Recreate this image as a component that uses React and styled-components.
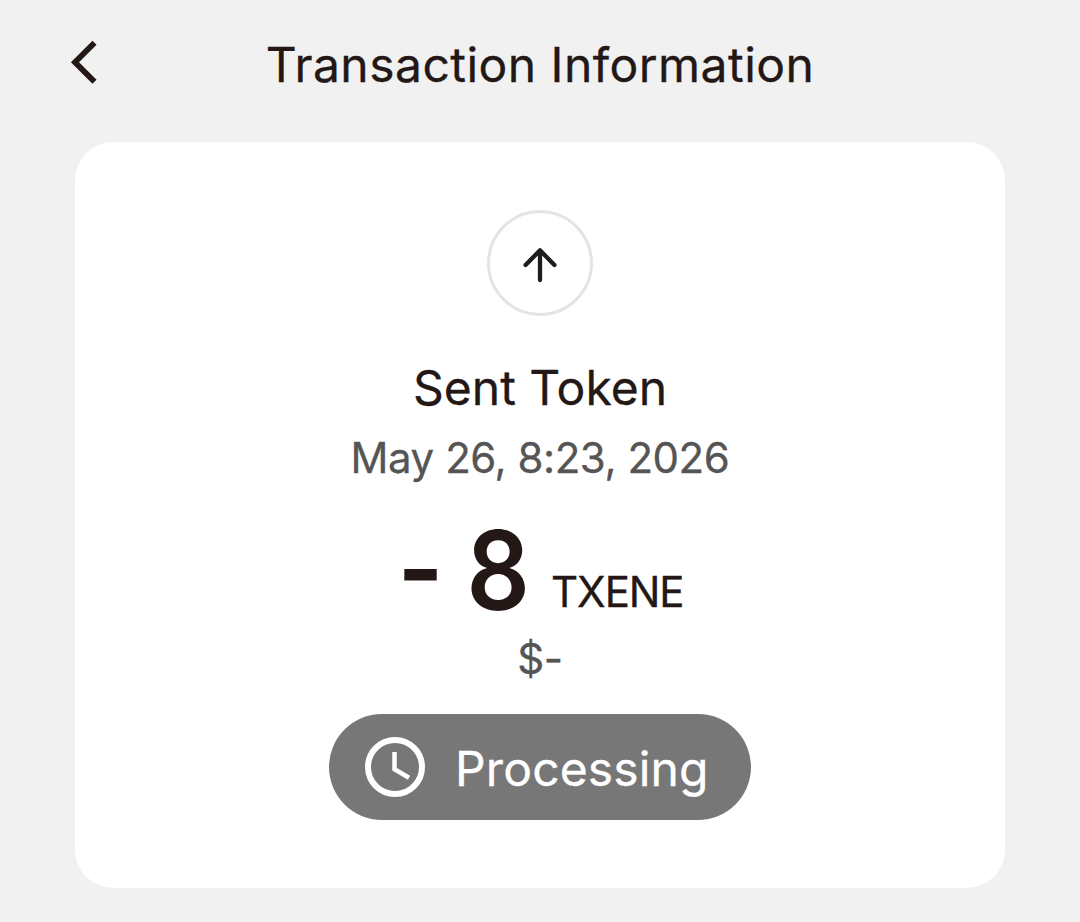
import React from 'react';
import styled, { createGlobalStyle } from 'styled-components';

const GlobalStyle = createGlobalStyle`
  * {
    box-sizing: border-box;
  }
  body {
    margin: 0;
    background: #f1f1f1;
    font-family: Inter, 'Liberation Sans', sans-serif;
    color: #231815;
  }
`;

const Page = styled.div`
  width: 1080px;
  height: 922px;
  padding: 0 75px;
  overflow: hidden;
`;

const Header = styled.header`
  display: grid;
  grid-template-columns: 50px 1fr 50px;
  align-items: center;
  height: 142px;
  padding-bottom: 12px;
`;

const BackButton = styled.button`
  width: 40px;
  height: 54px;
  margin-left: -10px;
  padding: 0;
  border: 0;
  background: none;
  cursor: pointer;
`;

const Icon = styled.svg`
  display: block;
  flex-shrink: 0;
  fill: none;
  stroke: ${props => props.$color};
`;

const Card = styled.main`
  display: flex;
  flex-direction: column;
  align-items: center;
  height: 746px;
  padding-top: 68px;
  border-radius: 38px;
  background: #fff;
`;

const IconCircle = styled.div`
  display: flex;
  align-items: center;
  justify-content: center;
  width: 106px;
  height: 106px;
  margin-bottom: 40px;
  border: 3px solid #e4e4e4;
  border-radius: 50%;
`;

const Text = styled.p`
  margin: 0;
  line-height: ${props => props.$height}px;
  font-size: ${props => props.$size}px;
  font-weight: 400;
  letter-spacing: ${props => props.$spacing || 0}px;
  color: ${props => props.$color || '#231815'};
  -webkit-text-stroke: 0.3px currentColor;
  text-align: center;
  white-space: nowrap;
`;

const Amount = styled.div`
  display: flex;
  align-items: flex-start;
  justify-content: center;
  height: 133px;
  padding-right: 1px;
`;

const Value = styled.span`
  padding-top: 6px;
  font-size: 110px;
  line-height: 136px;
  font-weight: 600;
  transform: scaleX(0.9);
`;

const Sign = styled(Value)`
  padding-top: 4px;
  margin-right: 16px;
`;

const Unit = styled(Text)`
  margin: 66px 0 0 18px;
`;

const Status = styled.div`
  display: flex;
  align-items: center;
  gap: 30px;
  width: 422px;
  height: 106px;
  margin-top: 24.5px;
  padding-left: 36px;
  border-radius: 53px;
  background: #777;
`;

const StatusText = styled(Text)`
  padding-top: 4px;
`;

function App() {
  return (
    <Page>
      <GlobalStyle />
      <Header>
        <BackButton aria-label="Back">
          <Icon width="40" height="54" $color="#231815" strokeWidth="5.8">
            <path d="M29.5 4.8 10 24.3l19.5 19.5" />
          </Icon>
        </BackButton>
        <Text as="h1" $height={60} $size={48} $spacing={0.46}>
          Transaction Information
        </Text>
      </Header>
      <Card>
        <IconCircle>
          <Icon
            width="40"
            height="40"
            $color="#1c1c1c"
            strokeWidth="4.3"
            strokeLinecap="round"
            strokeLinejoin="round"
          >
            <path d="M20 37V7.3M5.6 22 20 7.3 34.4 22" />
          </Icon>
        </IconCircle>
        <Text as="h2" $height={64} $size={48}>
          Sent Token
        </Text>
        <Text $height={76} $size={42} $spacing={-0.45} $color="#555">
          May 26, 8:23, 2026
        </Text>
        <Amount>
          <Sign>-</Sign>
          <Value>8</Value>
          <Unit as="span" $height={60} $size={42} $spacing={-1.1}>
            TXENE
          </Unit>
        </Amount>
        <Text $height={60} $size={42} $spacing={-0.5} $color="#555">
          $-
        </Text>
        <Status>
          <Icon width="60" height="60" $color="#fff">
            <circle cx="30" cy="30" r="27" strokeWidth="6" />
            <path d="M29.5 15v17.2L44 40.7" strokeWidth="4.5" />
          </Icon>
          <StatusText $height={60} $size={48} $spacing={0.15} $color="#fff">
            Processing
          </StatusText>
        </Status>
      </Card>
    </Page>
  );
}

export default App;
